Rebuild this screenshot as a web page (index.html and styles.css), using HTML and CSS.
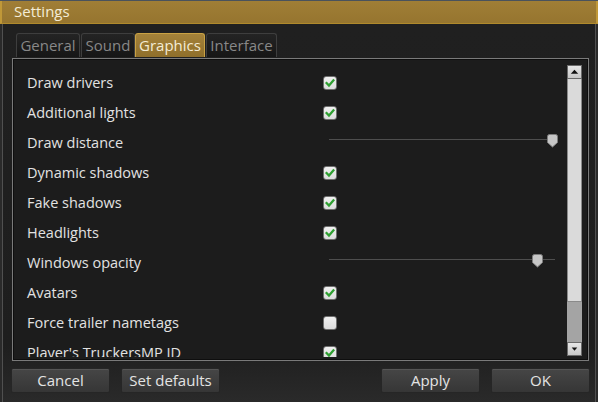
FILE: index.html
```html
<!DOCTYPE html>
<html>
<head>
<meta charset="utf-8">
<link rel="stylesheet" href="styles.css">
</head>
<body>
<div class="titlebar">Settings</div>
<div class="main">
  <div class="tabs">
    <div class="tab tab-general">General</div>
    <div class="tab tab-sound">Sound</div>
    <div class="tab tab-graphics active">Graphics</div>
    <div class="tab tab-interface">Interface</div>
  </div>
  <div class="panel">
    <div class="list">
      <div class="row"><span class="label">Draw drivers</span><span class="check on"><svg viewBox="0 0 14 14"><path d="M3 7 L5.8 10 L11 4"/></svg></span></div>
      <div class="row"><span class="label">Additional lights</span><span class="check on"><svg viewBox="0 0 14 14"><path d="M3 7 L5.8 10 L11 4"/></svg></span></div>
      <div class="row"><span class="label">Draw distance</span><span class="slider"><span class="track"></span><svg class="thumb" style="left:218px" viewBox="0 0 11 14"><path d="M0.5 2.5 Q0.5 0.5 2.5 0.5 H8.5 Q10.5 0.5 10.5 2.5 V8.5 L5.5 13 L0.5 8.5 Z"/></svg></span></div>
      <div class="row"><span class="label">Dynamic shadows</span><span class="check on"><svg viewBox="0 0 14 14"><path d="M3 7 L5.8 10 L11 4"/></svg></span></div>
      <div class="row"><span class="label">Fake shadows</span><span class="check on"><svg viewBox="0 0 14 14"><path d="M3 7 L5.8 10 L11 4"/></svg></span></div>
      <div class="row"><span class="label">Headlights</span><span class="check on"><svg viewBox="0 0 14 14"><path d="M3 7 L5.8 10 L11 4"/></svg></span></div>
      <div class="row"><span class="label">Windows opacity</span><span class="slider"><span class="track"></span><svg class="thumb" style="left:203px" viewBox="0 0 11 14"><path d="M0.5 2.5 Q0.5 0.5 2.5 0.5 H8.5 Q10.5 0.5 10.5 2.5 V8.5 L5.5 13 L0.5 8.5 Z"/></svg></span></div>
      <div class="row"><span class="label">Avatars</span><span class="check on"><svg viewBox="0 0 14 14"><path d="M3 7 L5.8 10 L11 4"/></svg></span></div>
      <div class="row"><span class="label">Force trailer nametags</span><span class="check"></span></div>
      <div class="row"><span class="label">Player's TruckersMP ID</span><span class="check on"><svg viewBox="0 0 14 14"><path d="M3 7 L5.8 10 L11 4"/></svg></span></div>
      <div class="row"><span class="label">Show own ID</span><span class="check on"><svg viewBox="0 0 14 14"><path d="M3 7 L5.8 10 L11 4"/></svg></span></div>
    </div>
    <div class="scrollbar">
      <div class="sb-btn"><svg viewBox="0 0 13 13"><path d="M2.5 8.5 H10.5 L6.5 4 Z"/></svg></div>
      <div class="sb-thumb"></div>
      <div class="sb-track"></div>
      <div class="sb-btn"><svg viewBox="0 0 13 13"><path d="M3.5 5 H9.5 L6.5 8.5 Z"/></svg></div>
    </div>
  </div>
  <div class="buttons">
    <div class="btn">Cancel</div>
    <div class="btn">Set defaults</div>
    <div class="btn push">Apply</div>
    <div class="btn">OK</div>
  </div>
</div>
</body>
</html>
```
FILE: styles.css
```css
html, body {
  margin: 0;
  padding: 0;
}
body {
  width: 598px;
  height: 402px;
  overflow: hidden;
  background: #1f1f1f;
  font-family: "Open Sans", "DejaVu Sans", sans-serif;
  font-size: 14.5px;
  border-top: 1px solid #4a525c;
  box-sizing: border-box;
}
.titlebar {
  height: 22px;
  line-height: 21px;
  padding-left: 12px;
  background: linear-gradient(#a07e36, #96752f);
  border-left: 2px solid #c09838;
  border-right: 2px solid #c09838;
  border-bottom: 1px solid #b08a2c;
  color: #f4ecd6;
  box-shadow: 0 1px 0 #0c0c0c;
  font-size: 15px;
}
.main {
  height: 378px;
  border-left: 2px solid #2a2a2a;
  border-right: 2px solid #2a2a2a;
  box-shadow: inset 1px 0 #505050, inset -1px 0 #505050;
  background: linear-gradient(180deg, #202020 0%, #1e1e1e 85%, #2a2a2a 100%);
}
.tabs {
  display: flex;
  padding-top: 9px;
  padding-left: 14px;
  gap: 1px;
  height: 25px;
}
.tab {
  height: 24px;
  line-height: 22px;
  box-sizing: border-box;
  border: 1px solid #3e3e3e;
  border-bottom: none;
  border-radius: 3px 3px 0 0;
  background: linear-gradient(#242424, #161616);
  color: #888888;
  text-align: center;
  font-size: 15px;
}
.tab-general { width: 64px; }
.tab-sound { width: 54px; }
.tab-graphics { width: 70px; margin-left: -1px; }
.tab-interface { width: 71px; }
.tab.active {
  background: linear-gradient(#a4823a, #8f6f2b);
  border-color: #c9a244;
  color: #f4ecd6;
}
.panel {
  display: flex;
  height: 303px;
  box-sizing: border-box;
  margin: 0 7px 0 10px;
  border: 1px solid #7a7a7a;
  box-shadow: inset 0 0 0 1px #0e0e0e;
  background: #1c1c1c;
}
.list {
  flex: 1;
  overflow: hidden;
  margin: 1px 0 3px 1px;
  padding: 7px 0 0 13px;
}
.row {
  height: 30px;
  display: flex;
  align-items: center;
  color: #e2e2e2;
}
.label {
  width: 296px;
  flex: none;
  white-space: nowrap;
}
.check {
  width: 14px;
  height: 14px;
  box-sizing: border-box;
  border: 1px solid #6e6e6e;
  border-radius: 3px;
  background: linear-gradient(#f0f0f0, #dcdcdc);
  display: block;
  margin-top: 1px;
}
.check svg {
  display: block;
  width: 12px;
  height: 12px;
}
.check svg path {
  fill: none;
  stroke: #2fa032;
  stroke-width: 2.6;
  stroke-linecap: square;
}
.slider {
  position: relative;
  display: block;
  width: 226px;
  height: 14px;
  margin-left: 6px;
  margin-top: -1px;
}
.track {
  position: absolute;
  left: 0;
  right: 0;
  top: 4px;
  height: 1px;
  background: #4e4e4e;
}
.thumb {
  position: absolute;
  top: -1px;
  width: 11px;
  height: 14px;
}
.thumb path {
  fill: #c6c6c6;
  stroke: #7c7c7c;
  stroke-width: 1;
}
.scrollbar {
  width: 15px;
  flex: none;
  margin: 6px 6px 4px 0;
  display: flex;
  flex-direction: column;
}
.sb-btn {
  height: 14px;
  box-sizing: border-box;
  border: 1px solid #6a6a6a;
  background: linear-gradient(#e6e6e6, #c8c8c8);
}
.sb-btn svg {
  display: block;
  width: 13px;
  height: 12px;
}
.sb-btn svg path {
  fill: #111;
}
.sb-thumb {
  height: 223px;
  box-sizing: border-box;
  border: 1px solid #8a8a8a;
  border-top: none;
  background: #dadada;
}
.sb-track {
  height: 40px;
  background: #a4a4a4;
}
.buttons {
  display: flex;
  gap: 11px;
  padding: 7px 6px 0 9px;
}
.btn {
  width: 99px;
  height: 25px;
  line-height: 23px;
  box-sizing: border-box;
  text-align: center;
  color: #e4e4e4;
  background: linear-gradient(#464646, #363636);
  border: 1px solid #262626;
  border-radius: 2px;
  box-shadow: inset 0 1px 0 #555;
  font-size: 15px;
}
.push {
  margin-left: auto;
}
```
